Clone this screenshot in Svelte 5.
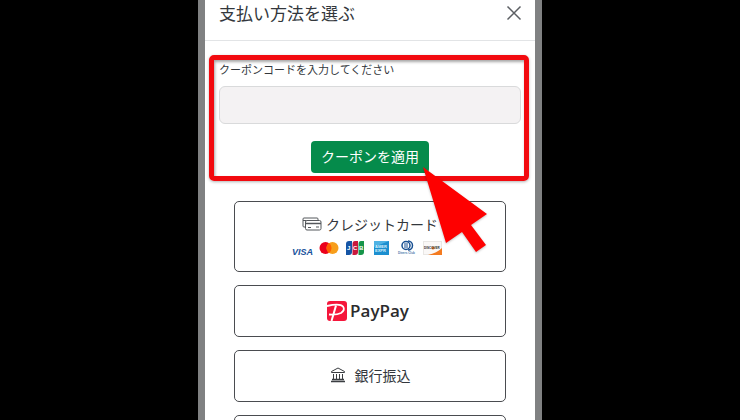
<script lang="ts">
  let couponCode = $state('');

  const methods = ['card', 'paypay', 'bank', 'other'];
</script>

<div class="backdrop">
  <section class="dialog" role="dialog" aria-labelledby="dialog-title">
    <header>
      <h1 id="dialog-title">支払い方法を選ぶ</h1>
      <button type="button" class="close">
        <svg width="14" height="14" viewBox="0 0 14 14" aria-hidden="true">
          <path d="M0.5 0.5 13.5 13.5M13.5 0.5 0.5 13.5" stroke="#5c5f63" stroke-width="1.5" />
        </svg>
      </button>
    </header>

    <form class="coupon" onsubmit={(e) => e.preventDefault()}>
      <label for="coupon-code">クーポンコードを入力してください</label>
      <input id="coupon-code" type="text" autocomplete="off" bind:value={couponCode} />
      <button type="submit" class="apply">クーポンを適用</button>

      <svg class="pointer" width="72" height="94" viewBox="0 0 72 94" aria-hidden="true">
        <path d="M3 2 67 49 51 60 66 80 56 87 42 67 26 78Z" fill="#fe0000" />
      </svg>
    </form>

    <div class="methods">
      {#each methods as method (method)}
        <button type="button" class="method {method}">
          {#if method === 'card'}
            <span class="name">
              <svg width="20" height="14" viewBox="0 0 20 14" fill="none" stroke="#55585c" aria-hidden="true">
                <path d="M3 10H2Q1 10 1 9V2Q1 1 2 1H15Q16 1 16 2V3" />
                <path d="M1 3.5H4" />
                <rect x="3.5" y="3.5" width="15.5" height="9.5" rx="1.5" fill="#fff" />
                <path d="M3.5 6.5H19" stroke-width="1.5" />
                <path d="M6 10.5H9M14 10H17" />
              </svg>
              クレジットカード
            </span>
            <span class="brands">
              <svg width="20" height="16" viewBox="0 0 20 16">
                <text x="-1" y="15" class="visa">VISA</text>
              </svg>
              <svg width="20" height="16" viewBox="0 0 20 16" aria-hidden="true">
                <circle cx="6.5" cy="8" r="6" fill="#eb001b" />
                <circle cx="13.5" cy="8" r="6" fill="#f79e1b" />
                <path d="M10 3.1A6 6 0 0 1 10 12.9A6 6 0 0 1 10 3.1Z" fill="#ff5f00" />
              </svg>
              <svg width="20" height="16" viewBox="0 0 20 16">
                <path d="M4 1H7V12Q7 15 4 15H1V4Q1 1 4 1Z" fill="#1655a5" />
                <path d="M10 1H13V12Q13 15 10 15H7.5V4Q7.5 1 10 1Z" fill="#c9173d" />
                <path d="M16 1H19V12Q19 15 16 15H13.5V4Q13.5 1 16 1Z" fill="#16954a" />
                <text x="2" y="10" class="jcb">J</text>
                <text x="8" y="10" class="jcb">C</text>
                <text x="14" y="10" class="jcb">B</text>
              </svg>
              <svg width="20" height="16" viewBox="0 0 20 16">
                <rect x="3" y="1" width="15" height="14" fill="#1c8fd0" />
                <path d="M3 1H18L3 7Z" fill="#50b3e4" />
                <text x="4" y="8" class="amex">AMER</text>
                <text x="4" y="12" class="amex">EXPR</text>
              </svg>
              <svg width="20" height="16" viewBox="0 0 20 16">
                <circle cx="9" cy="5.5" r="4" fill="#fff" stroke="#174f91" stroke-width="1.5" />
                <path d="M11 1A4.5 4.5 0 0 1 11 10" fill="none" stroke="#174f91" stroke-width="1.5" />
                <path d="M8 3V8M10 3V8" stroke="#174f91" />
                <text x="1" y="14" class="diners">Diners Club</text>
              </svg>
              <svg width="20" height="16" viewBox="0 0 20 16">
                <rect x="0.5" y="1.5" width="18" height="13" fill="#faf8f7" stroke="#e9e7e5" />
                <path d="M19 8V15H5Q14 13 19 8Z" fill="#f47b20" />
                <circle cx="10" cy="8" r="1.5" fill="#f47b20" />
                <text x="1" y="9" class="discover">DISCOVER</text>
              </svg>
            </span>
          {:else if method === 'paypay'}
            <svg width="20" height="20" viewBox="0 0 20 20" aria-hidden="true">
              <rect width="20" height="20" rx="3" fill="#f5163b" />
              <path d="M0 5Q13 2 16 5.5Q18.5 9 14 12Q10 14 2 13.5" fill="none" stroke="#fff" stroke-width="1.8" />
              <path d="M9 4.5 4.5 20" fill="none" stroke="#fff" stroke-width="2" />
            </svg>
            <span class="wordmark">PayPay</span>
          {:else if method === 'bank'}
            <svg width="16" height="16" viewBox="0 0 16 16" fill="none" stroke="#3b3e42" aria-hidden="true">
              <path d="M1.5 5.5V4.5L8 1 14.5 4.5V5.5Z" />
              <path d="M3.5 7V12M6.5 7V12M9.5 7V12M12.5 7V12" />
              <path d="M2 12.5H14M1 14.5H15" stroke-width="1.3" />
            </svg>
            銀行振込
          {/if}
        </button>
      {/each}
    </div>
  </section>
</div>

<style>
  :global(body) {
    margin: 0;
    background: #000;
  }

  * {
    box-sizing: border-box;
  }

  .backdrop {
    height: 100vh;
    max-width: 344px;
    margin: 0 auto;
    padding: 0 7px;
    overflow: hidden;
    background: #808182;
    font-family: 'Noto Sans CJK JP', sans-serif;
    color: #33373c;
  }

  .dialog {
    min-height: 100%;
    background: #fff;
  }

  header {
    display: flex;
    align-items: center;
    justify-content: space-between;
    padding: 0 14px 14px;
    border-bottom: 1px solid #e2e4e6;
  }

  h1 {
    margin: 0;
    font-size: 17px;
    line-height: 26px;
    font-weight: 400;
  }

  button {
    font-family: inherit;
    font-size: 14px;
    color: inherit;
    cursor: pointer;
  }

  svg {
    display: block;
    flex: none;
    overflow: visible;
  }

  .close {
    padding: 0;
    border: 0;
    background: none;
  }

  .coupon {
    position: relative;
    display: flex;
    flex-direction: column;
    margin: 14px 6px 20px 4px;
    padding: 0 3px 3px 5px;
    border: 5px solid #f20a0f;
    border-radius: 5px;
    box-shadow:
      0 1px 3px rgba(0, 0, 0, 0.3),
      inset 1px 2px 3px rgba(0, 0, 0, 0.35);
  }

  label {
    font-size: 11px;
    line-height: 18px;
  }

  input {
    height: 38px;
    margin: 8px 0 17px;
    padding: 0 12px;
    border: 1px solid #d9dadb;
    border-radius: 6px;
    background: #f4f2f3;
    font-family: inherit;
    font-size: 14px;
  }

  .apply {
    align-self: center;
    height: 32px;
    padding: 0 10px 2px;
    border: 0;
    border-radius: 4px;
    background: #058b4b;
    color: #fff;
  }

  .pointer {
    position: absolute;
    top: 105px;
    left: 206px;
    filter: drop-shadow(0 1px 1px rgba(0, 0, 0, 0.25));
    pointer-events: none;
  }

  .methods {
    display: flex;
    flex-direction: column;
    gap: 13px;
    padding: 0 29px;
  }

  .method {
    display: flex;
    align-items: center;
    justify-content: center;
    min-height: 52px;
    padding: 0 0 2px;
    border: 1px solid #4a4c50;
    border-radius: 5px;
    background: #fff;
  }

  .card {
    flex-direction: column;
    gap: 6px;
    padding: 12px 0 15px;
  }

  .name {
    display: flex;
    align-items: center;
    gap: 4px;
    line-height: 20px;
  }

  .brands {
    display: flex;
    gap: 6px;
    padding-right: 4px;
  }

  .paypay {
    gap: 3px;
    padding: 0 4px 0 0;
  }

  .bank {
    gap: 9px;
  }

  .wordmark {
    font-family: 'Open Sans', sans-serif;
    font-size: 17px;
    line-height: 20px;
    font-weight: 600;
    color: #2b2b2d;
  }

  text {
    font-family: 'Liberation Sans', sans-serif;
    font-weight: 700;
  }

  .visa {
    font-size: 9px;
    font-style: italic;
    fill: #17529b;
  }

  .jcb {
    font-size: 6px;
    fill: #fff;
  }

  .amex {
    font-size: 4px;
    fill: #d9f0fb;
  }

  .diners {
    font-size: 3px;
    fill: #4b79ab;
  }

  .discover {
    font-size: 3px;
    fill: #2b2b2d;
  }
</style>
